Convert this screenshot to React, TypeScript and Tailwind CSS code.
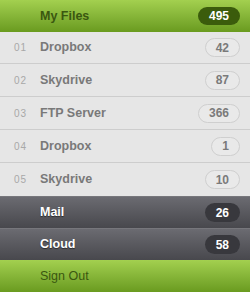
const files = [
  { num: '01', label: 'Dropbox', count: 42, h: 'h-[32px]' },
  { num: '02', label: 'Skydrive', count: 87, h: 'h-[33px]' },
  { num: '03', label: 'FTP Server', count: 366, h: 'h-[33px]' },
  { num: '04', label: 'Dropbox', count: 1, h: 'h-[33px]' },
  { num: '05', label: 'Skydrive', count: 10, h: 'h-[33px]' },
];

const extras = [
  { label: 'Mail', count: 26 },
  { label: 'Cloud', count: 58 },
];

export default function App() {
  return (
    <div className="w-[250px] h-[292px] flex flex-col font-['Liberation_Sans',Arial,sans-serif] text-[12px] overflow-hidden">
      {/* Header */}
      <div className="h-[32px] flex items-center pl-[40px] pr-[10px] bg-gradient-to-b from-[#a3d04f] to-[#6a9b1f]">
        <span className="flex-1 font-bold text-[#3a5710] text-[12.5px]">My Files</span>
        <span className="h-[18px] min-w-[29px] px-[11px] rounded-full bg-[#3b5c0c] text-white font-bold flex items-center justify-center">
          495
        </span>
      </div>

      {/* Folder rows */}
      {files.map((f, i) => (
        <div
          key={i}
          className={`${f.h} flex items-center pl-[14px] pr-[10px] bg-[#e6e6e6] ${i < files.length - 1 ? 'border-b border-[#cdcdcd]' : ''}`}
        >
          <span className="w-[26px] text-[10px] tracking-[1px] text-[#a8a8a8]">{f.num}</span>
          <span className="flex-1 font-bold text-[#797979] text-[12.5px]">{f.label}</span>
          <span className="h-[19px] min-w-[29px] px-[10px] rounded-full border border-[#cfcfcf] bg-[#e9e9e9] text-[#7a7a7a] font-bold flex items-center justify-center">
            {f.count}
          </span>
        </div>
      ))}

      {/* Dark rows */}
      {extras.map((e, i) => (
        <div
          key={i}
          className="h-[32px] flex items-center pl-[40px] pr-[10px] bg-gradient-to-b from-[#6b6b71] to-[#48484d] border-t border-[#77777c]"
        >
          <span className="flex-1 font-bold text-white text-[12.5px] [text-shadow:0_1px_1px_rgba(0,0,0,0.5)]">{e.label}</span>
          <span className="h-[19px] min-w-[29px] px-[11px] rounded-full bg-[#38383d] text-white font-bold flex items-center justify-center">
            {e.count}
          </span>
        </div>
      ))}

      {/* Sign out */}
      <div className="h-[32px] flex items-center pl-[40px] bg-gradient-to-b from-[#a3d04f] to-[#6a9b1f]">
        <span className="text-[#3a5710] text-[12.5px]">Sign Out</span>
      </div>
    </div>
  );
}
